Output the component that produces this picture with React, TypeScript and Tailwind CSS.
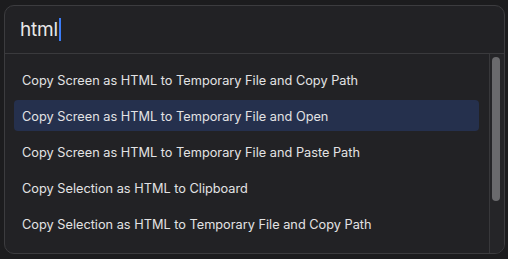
const items = [
  'Copy Screen as HTML to Temporary File and Copy Path',
  'Copy Screen as HTML to Temporary File and Open',
  'Copy Screen as HTML to Temporary File and Paste Path',
  'Copy Selection as HTML to Clipboard',
  'Copy Selection as HTML to Temporary File and Copy Path',
]

export default function App() {
  const selected = 1

  return (
    <div className="w-[508px] h-[259px] bg-[#1c1c1e] pt-[5px] pl-[4px] pr-[3px] pb-[5px] font-['Inter','Liberation_Sans',sans-serif]">
      <div className="flex h-full flex-col overflow-hidden rounded-[10px] border border-[#3c3c3f] bg-[#222225]">
        {/* Search field */}
        <div className="flex h-[48px] shrink-0 items-center border-b border-[#3a3a3d] pl-[15px]">
          <span className="text-[19px] leading-none tracking-[-0.2px] text-[#e8e8e8]">html</span>
          <span className="ml-[1px] h-[23px] w-[2px] bg-[#3b7cf7]" />
        </div>

        {/* Results */}
        <div className="flex min-h-0 flex-1">
          <div className="flex flex-1 flex-col gap-[5px] pl-[9px] pr-[10px] pt-[10px]">
            {items.map((label, i) => (
              <div
                key={label}
                className={
                  i === selected
                    ? 'flex h-[31px] items-center rounded-[4px] bg-[#25304d] px-[8px] pt-[2px] text-[12.75px] text-[#e2e2e4]'
                    : 'flex h-[31px] items-center rounded-[4px] px-[8px] pt-[2px] text-[12.75px] text-[#e2e2e4]'
                }
              >
                {label}
              </div>
            ))}
          </div>

          {/* Scrollbar */}
          <div className="w-[15px] shrink-0 border-l border-[#38383b] bg-[#252528] pl-[2px] pt-[3px]">
            <div className="h-[144px] w-[8px] rounded-full bg-[#6a6a6d]" />
          </div>
        </div>
      </div>
    </div>
  )
}
